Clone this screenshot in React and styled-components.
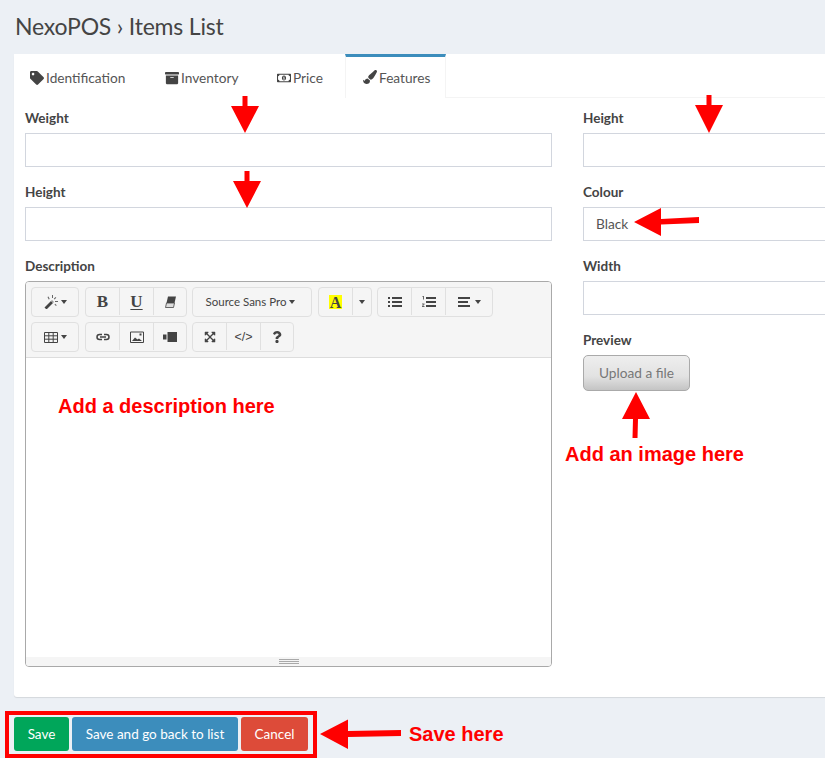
import React from "react";
import styled, { createGlobalStyle } from "styled-components";
import { FaTag, FaArchive, FaRegMoneyBillAlt, FaPaintBrush, FaExpandArrowsAlt, FaQuestion } from "react-icons/fa";

const GlobalStyle = createGlobalStyle`
  html, body { margin: 0; padding: 0; background: #ecf0f5; }
  body { font-family: Lato, "Noto Sans", sans-serif; color: #444; }
  * { box-sizing: border-box; }
`;

const Page = styled.div`
  position: relative;
  width: 825px;
  height: 758px;
  overflow: hidden;
  padding: 0 0 0 14px;
`;

const Title = styled.h1`
  margin: 0;
  height: 54px;
  padding: 12px 0 0 1px;
  font-size: 23px;
  line-height: 28px;
  font-weight: 400;
  letter-spacing: -0.2px;
  color: #444;
`;

const Card = styled.div`
  width: 900px;
  height: 643px;
  background: #fff;
  border-radius: 3px 0 0 3px;
  box-shadow: 0 1px 1px rgba(0, 0, 0, 0.1);
`;

const Tabs = styled.div`
  display: flex;
  height: 44px;
  border-bottom: 1px solid #f4f4f4;
`;

const Tab = styled.div`
  display: flex;
  align-items: center;
  gap: 2px;
  height: 44px;
  width: ${(p) => p.$width}px;
  padding: ${(p) => (p.$active ? "0" : "3px")} 0 ${(p) => (p.$active ? "1px" : "0")} ${(p) => p.$pad}px;
  font-size: 13.7px;
  color: #555;
  background: #fff;
  border-top: ${(p) => (p.$active ? "3px solid #3c8dbc" : "none")};
  border-left: ${(p) => (p.$active ? "1px solid #f4f4f4" : "none")};
  border-right: ${(p) => (p.$active ? "1px solid #f4f4f4" : "none")};
  svg { color: #444; font-size: 14px; }
`;

const Form = styled.div`
  display: grid;
  grid-template-columns: 527px 300px;
  column-gap: 31px;
  padding: 12px 0 0 11px;
`;

const Column = styled.div`
  display: flex;
  flex-direction: column;
`;

const Field = styled.div`
  display: flex;
  flex-direction: column;
  margin-bottom: 17px;
`;

const Label = styled.label`
  height: 23px;
  line-height: 17px;
  font-size: 13.5px;
  font-weight: 700;
  color: #444;
`;

const Input = styled.div`
  height: 34px;
  padding: 0 12px;
  line-height: 31px;
  font-size: 13.7px;
  color: #555;
  border: 1px solid #d2d6de;
  background: #fff;
`;

const Editor = styled.div`
  display: flex;
  flex-direction: column;
  height: 386px;
  border: 1px solid #a9a9a9;
  border-radius: 4px;
  overflow: hidden;
`;

const Toolbar = styled.div`
  display: flex;
  flex-direction: column;
  gap: 5px;
  height: 76px;
  padding: 5px 0 0 5px;
  background: #f5f5f5;
  border-bottom: 1px solid #ddd;
`;

const ToolRow = styled.div`
  display: flex;
  gap: 5px;
  height: 30px;
`;

const ToolGroup = styled.div`
  display: flex;
  height: 30px;
  margin-left: ${(p) => (p.$wide ? "1px" : "0")};
  border: 1px solid #e0e0e0;
  border-radius: 4px;
`;

const ToolButton = styled.div`
  display: flex;
  align-items: center;
  justify-content: center;
  gap: 3px;
  width: ${(p) => p.$width}px;
  height: 27px;
  font-size: 11.5px;
  color: #444;
  border-left: ${(p) => (p.$first ? "none" : "1px solid #e0e0e0")};
  svg { font-size: 12px; color: #444; }
`;

const FontButton = styled(ToolButton)`
  padding-right: 3px;
`;

const Caret = styled.span`
  width: 0;
  height: 0;
  border-left: 3px solid transparent;
  border-right: 3px solid transparent;
  border-top: 4px solid #444;
`;

const ColorLetter = styled.span`
  display: block;
  width: 13px;
  height: 14px;
  background: #ff0;
  font-family: "Liberation Serif", serif;
  font-weight: 700;
  font-size: 16px;
  line-height: 15px;
  text-align: center;
  color: #444;
`;

const SerifGlyph = styled.span`
  font-family: "Liberation Serif", serif;
  font-weight: 700;
  font-size: 17px;
  color: #444;
  text-decoration: ${(p) => (p.$underline ? "underline" : "none")};
  text-underline-offset: 2px;
`;

const CodeGlyph = styled.span`
  font-family: "Liberation Sans", sans-serif;
  font-size: 12.5px;
  color: #444;
`;

const EditorBody = styled.div`
  flex: 1;
  background: #fff;
`;

const Statusbar = styled.div`
  display: flex;
  flex-direction: column;
  align-items: center;
  justify-content: center;
  gap: 1px;
  height: 9px;
  background: #f5f5f5;
`;

const GripLine = styled.span`
  display: block;
  width: 20px;
  height: 1px;
  background: #a9a9a9;
`;

const UploadButton = styled.div`
  display: flex;
  align-items: center;
  justify-content: center;
  width: 107px;
  height: 36px;
  padding-bottom: 2px;
  font-size: 13.7px;
  color: #777;
  border: 1px solid #aaa;
  border-radius: 5px;
  background: linear-gradient(#eee, #e2e2e2 60%, #c4c4c4);
`;

const Actions = styled.div`
  display: flex;
  gap: 3px;
  margin-top: 20px;
`;

const ActionButton = styled.div`
  display: flex;
  align-items: center;
  justify-content: center;
  width: ${(p) => p.$width}px;
  height: 34px;
  font-size: 13.5px;
  color: #fff;
  background: ${(p) => p.$bg};
  border-radius: 3px;
`;

// annotations drawn on top of the screenshot
const RedFrame = styled.div`
  position: absolute;
  left: 5px;
  top: 711px;
  width: 312px;
  height: 47px;
  border: 4px solid #f00;
`;

const Note = styled.span`
  position: absolute;
  left: ${(p) => p.$x}px;
  top: ${(p) => p.$y}px;
  font-family: "Liberation Sans", Arial, sans-serif;
  font-weight: 700;
  font-size: 20px;
  line-height: 24px;
  color: #f00;
  white-space: nowrap;
`;

const ArrowSvg = styled.svg`
  position: absolute;
  left: 0;
  top: 0;
  width: 825px;
  height: 758px;
  pointer-events: none;
`;

const Arrows = () => (
  <ArrowSvg viewBox="0 0 825 758">
    <g fill="#f00" stroke="none">
      <path d="M242.5 96h5v10H259L245 133 231 106h11.5z" />
      <path d="M244.5 171h5v10H261L247 208 233 181h11.500z" />
      <path d="M706.5 95h5v10H723L709 133 695 105h11.500z" />
      <path d="M634 222l27-14v11l38-2v6l-38 1.500V236z" />
      <path d="M636 392l14 27h-12l-.5 19h-5l.5-19h-11z" />
      <path d="M320 734l28-14.500V731l53-1v6l-53 1v12z" />
    </g>
  </ArrowSvg>
);

// summernote toolbar glyphs
const Glyph = ({ children }) => (
  <svg width="14" height="14" viewBox="0 0 14 14" fill="#444">{children}</svg>
);

const WandIcon = () => (
  <Glyph>
    <path d="M0.500 12.500L7 6l2 2-6.500 6.500z" />
    <path d="M7 6l1-1 2 2-1 1z" fill="#999" />
    <path d="M8 0h1v3H8zM3.500 2l1-.5 1.200 2.500-1 .5zM11 6h3v1h-3zM11.500 2l.8.7-1.800 1.800-.7-.7zM10.500 9.500l.7-.7 1.500 1.500-.7.700z" fill="#666" />
  </Glyph>
);

const EraserIcon = () => (
  <Glyph>
    <path d="M5 1.500h8L11.500 8H3.500z" />
    <path d="M3.500 8h8l-1 4.500H2.500z" fill="#ddd" stroke="#444" strokeWidth="0.8" />
  </Glyph>
);

const ListIcon = () => (
  <Glyph>
    <path d="M4 2h10v2H4zM4 6h10v2H4zM4 10h10v2H4z" />
    <path d="M0 2h2v2H0zM0 6h2v2H0zM0 10h2v2H0z" />
  </Glyph>
);

const OrderedIcon = () => (
  <Glyph>
    <path d="M4 2h10v2H4zM4 6h10v2H4zM4 10h10v2H4z" />
    <path d="M0.500 1h1.500v3.500H1V2H.500zM0 8.500h2.500v1L1 11h1.500v1H0v-1l1.500-1.500H0z" fill="#666" />
  </Glyph>
);

const AlignIcon = () => (
  <Glyph>
    <path d="M0 2h12v2H0zM0 6h10v2H0zM0 10h12v2H0z" />
  </Glyph>
);

const TableIcon = () => (
  <Glyph>
    <path
      d="M.500 2.500h13v10H.500zM.500 5.800h13M.500 9.200h13M4.800 2.500v10M9.200 2.500v10"
      fill="none"
      stroke="#444"
      strokeWidth="1"
    />
  </Glyph>
);

const LinkIcon = () => (
  <Glyph>
    <path
      d="M6 4.500H3.500a2.500 2.500 0 0 0 0 5H6M8 4.500h2.500a2.500 2.500 0 0 1 0 5H8M4 7h6"
      fill="none"
      stroke="#444"
      strokeWidth="1.500"
    />
  </Glyph>
);

const ImageIcon = () => (
  <Glyph>
    <path d="M.500 2h13v10.500H.500z" fill="none" stroke="#444" />
    <path d="M2 11l3-3.500 2.500 2 1.500-1 3 2.500z" />
    <path d="M9.500 3.500h2v2h-2z" />
  </Glyph>
);

const VideoIcon = () => (
  <Glyph>
    <path d="M4.500 2h9.500v10H4.500z" />
    <path d="M0 4.500h3.500v5H0z" />
  </Glyph>
);

const App = () => (
  <Page>
    <GlobalStyle />
    <Title>NexoPOS › Items List</Title>
    <Card>
      <Tabs>
        <Tab $width={131} $pad={16}><FaTag />Identification</Tab>
        <Tab $width={112} $pad={20}><FaArchive />Inventory</Tab>
        <Tab $width={88} $pad={20}><FaRegMoneyBillAlt />Price</Tab>
        <Tab $width={101} $pad={17} $active><FaPaintBrush />Features</Tab>
      </Tabs>
      <Form>
        <Column>
          <Field>
            <Label>Weight</Label>
            <Input />
          </Field>
          <Field>
            <Label>Height</Label>
            <Input />
          </Field>
          <Field>
            <Label>Description</Label>
            <Editor>
              <Toolbar>
                <ToolRow>
                  <ToolGroup>
                    <ToolButton $width={46} $first><WandIcon /><Caret /></ToolButton>
                  </ToolGroup>
                  <ToolGroup $wide>
                    <ToolButton $width={33} $first><SerifGlyph>B</SerifGlyph></ToolButton>
                    <ToolButton $width={34}><SerifGlyph $underline>U</SerifGlyph></ToolButton>
                    <ToolButton $width={33}><EraserIcon /></ToolButton>
                  </ToolGroup>
                  <ToolGroup>
                    <FontButton $width={118} $first>Source Sans Pro <Caret /></FontButton>
                  </ToolGroup>
                  <ToolGroup $wide>
                    <ToolButton $width={33} $first><ColorLetter>A</ColorLetter></ToolButton>
                    <ToolButton $width={19}><Caret /></ToolButton>
                  </ToolGroup>
                  <ToolGroup>
                    <ToolButton $width={33} $first><ListIcon /></ToolButton>
                    <ToolButton $width={34}><OrderedIcon /></ToolButton>
                    <ToolButton $width={47}><AlignIcon /><Caret /></ToolButton>
                  </ToolGroup>
                </ToolRow>
                <ToolRow>
                  <ToolGroup>
                    <ToolButton $width={46} $first><TableIcon /><Caret /></ToolButton>
                  </ToolGroup>
                  <ToolGroup $wide>
                    <ToolButton $width={33} $first><LinkIcon /></ToolButton>
                    <ToolButton $width={34}><ImageIcon /></ToolButton>
                    <ToolButton $width={33}><VideoIcon /></ToolButton>
                  </ToolGroup>
                  <ToolGroup>
                    <ToolButton $width={33} $first><FaExpandArrowsAlt /></ToolButton>
                    <ToolButton $width={34}><CodeGlyph>&lt;/&gt;</CodeGlyph></ToolButton>
                    <ToolButton $width={33}><FaQuestion /></ToolButton>
                  </ToolGroup>
                </ToolRow>
              </Toolbar>
              <EditorBody />
              <Statusbar><GripLine /><GripLine /><GripLine /></Statusbar>
            </Editor>
          </Field>
        </Column>
        <Column>
          <Field>
            <Label>Height</Label>
            <Input />
          </Field>
          <Field>
            <Label>Colour</Label>
            <Input>Black</Input>
          </Field>
          <Field>
            <Label>Width</Label>
            <Input />
          </Field>
          <Field>
            <Label>Preview</Label>
            <UploadButton>Upload a file</UploadButton>
          </Field>
        </Column>
      </Form>
    </Card>
    <Actions>
      <ActionButton $width={55} $bg="#00a65a">Save</ActionButton>
      <ActionButton $width={166} $bg="#3c8dbc">Save and go back to list</ActionButton>
      <ActionButton $width={67} $bg="#dd4b39">Cancel</ActionButton>
    </Actions>
    <RedFrame />
    <Arrows />
    <Note $x={58} $y={394}>Add a description here</Note>
    <Note $x={565} $y={442}>Add an image here</Note>
    <Note $x={409} $y={722}>Save here</Note>
  </Page>
);

export default App;
